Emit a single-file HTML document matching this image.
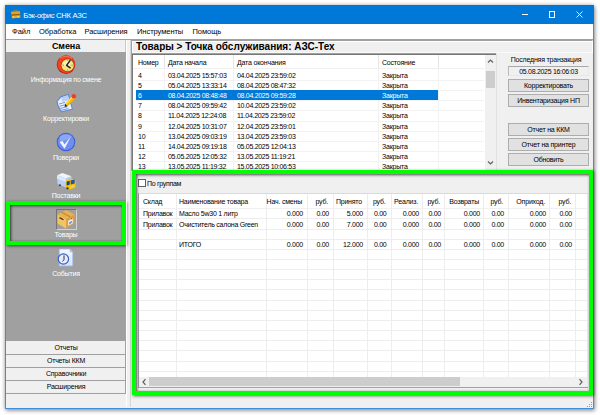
<!DOCTYPE html>
<html><head><meta charset="utf-8">
<style>
*{box-sizing:border-box}
html,body{margin:0;padding:0}
body{width:600px;height:415px;background:#fff;position:relative;overflow:hidden;font-family:"Liberation Sans",sans-serif;font-size:7px;color:#000}
.a{position:absolute}
.t{position:absolute;white-space:pre;line-height:10px;letter-spacing:-0.2px}
.c{text-align:center}
.btn{position:absolute;background:#e1e1e1;border:1px solid #adadad;text-align:center;line-height:11.5px;white-space:pre;letter-spacing:-0.2px}
.lb{position:absolute;left:6px;width:120px;text-align:center;color:#fff;white-space:pre;line-height:10px;letter-spacing:-0.2px}
.g{position:absolute;border:4px solid #00ff00;box-shadow:1px 1px 3px rgba(0,0,0,.6), inset 1px 1px 3px rgba(0,0,0,.7)}
</style></head><body>

<!-- window shadow + frame -->
<div class="a" style="left:5px;top:5px;width:589px;height:404px;background:#f0f0f0;border:1px solid #3b8fdc;box-shadow:0 0 4px rgba(0,0,0,.3),1px 2px 4px rgba(0,0,0,.3)"></div>

<!-- title bar -->
<div class="a" style="left:5px;top:5px;width:589px;height:19px;background:#0078d7"></div>
<svg class="a" style="left:10px;top:9px" width="12" height="11" viewBox="0 0 12 11">
  <path d="M3.8 2.6 L4.2 1.2 L7.2 1.1 L7.6 2.4" fill="none" stroke="#b07818" stroke-width="0.9"/>
  <path d="M1.2 2.8 L10 2.3 L10.3 8.8 L1.9 9.3 Z" fill="#c88418"/>
  <path d="M1.2 2.8 L10 2.3 L10.1 5 L1.4 5.6 Z" fill="#e0a02c"/>
  <path d="M1.4 5.6 L10.1 5 L10.1 5.8 L1.5 6.4 Z" fill="#8c5a0c"/>
  <path d="M2 7 L10.2 6.5 L10.3 8.8 L1.9 9.3 Z" fill="#e8a828"/>
  <ellipse cx="3.5" cy="8" rx="1.2" ry="0.7" fill="#f8d860"/>
  <ellipse cx="8" cy="7.6" rx="1.2" ry="0.7" fill="#f8d860"/>
</svg>
<div class="t" style="left:23.3px;top:10.5px;color:#fff;font-size:7.6px;letter-spacing:-0.28px">Бэк-офис СНК АЗС</div>
<div class="a" style="left:522px;top:14px;width:6px;height:1px;background:#fff"></div>
<div class="a" style="left:549px;top:11px;width:6px;height:7px;border:1px solid #fff"></div>
<svg class="a" style="left:576px;top:11px" width="7" height="7" viewBox="0 0 7 7"><path d="M0.5 0.5L6.5 6.5M6.5 0.5L0.5 6.5" stroke="#fff" stroke-width="0.9"/></svg>

<!-- menu -->
<div class="a" style="left:6px;top:24px;width:587px;height:15px;background:#fff"></div>
<div class="a" style="left:6px;top:39px;width:587px;height:1px;background:#a0a0a0"></div>
<div class="t" style="left:12px;top:26.5px;font-size:7.5px;letter-spacing:-0.05px">Файл</div>
<div class="t" style="left:39px;top:26.5px;font-size:7.5px;letter-spacing:-0.05px">Обработка</div>
<div class="t" style="left:84.5px;top:26.5px;font-size:7.5px;letter-spacing:-0.05px">Расширения</div>
<div class="t" style="left:137px;top:26.5px;font-size:7.5px;letter-spacing:-0.05px">Инструменты</div>
<div class="t" style="left:192.5px;top:26.5px;font-size:7.5px;letter-spacing:-0.05px">Помощь</div>

<!-- left panel -->
<div class="a" style="left:6px;top:40px;width:120px;height:12px;background:#f0f0f0;border-right:1px solid #c8c8c8"></div>
<div class="t c" style="left:6px;top:41px;width:120px;font-weight:bold;font-size:9px;letter-spacing:-0.1px">Смена</div>
<div class="a" style="left:6px;top:52px;width:120px;height:289px;background:#a0a0a0"></div>

<!-- icons -->
<svg class="a" style="left:55px;top:54px" width="22" height="22" viewBox="0 0 22 22">
  <ellipse cx="11" cy="10.6" rx="9.2" ry="9.3" fill="#c01e08"/>
  <ellipse cx="11.2" cy="10.3" rx="8.6" ry="8.6" fill="#ee4422"/>
  <path d="M5 4 Q11 0.5 17 4" fill="none" stroke="#ff8a60" stroke-width="1.2" opacity=".7"/>
  <ellipse cx="12.6" cy="11.2" rx="6.8" ry="6.6" fill="#c02a10"/>
  <ellipse cx="12.6" cy="11.2" rx="6.1" ry="6" fill="#f4e67a"/>
  <ellipse cx="11.8" cy="9.8" rx="3.5" ry="3" fill="#fbf5b8" opacity=".8"/>
  <circle cx="12.6" cy="6.3" r="0.8" fill="#78a8ec"/><circle cx="17" cy="11.2" r="0.8" fill="#78a8ec"/>
  <circle cx="12.6" cy="16" r="0.8" fill="#78a8ec"/><circle cx="8.2" cy="11.2" r="0.8" fill="#78a8ec"/>
  <path d="M15 6.6 L11.6 11.4 L15.2 13.8" fill="none" stroke="#1a2038" stroke-width="1.5" stroke-linecap="round" stroke-linejoin="round"/>
</svg>
<div class="lb" style="top:75px">Информация по смене</div>

<svg class="a" style="left:54px;top:90px" width="24" height="24" viewBox="0 0 24 24">
  <path d="M2.6 11.5 L6.5 6.2 L14.5 3.8 L19 19.5 L7 22.6 L3 14.5 Z" fill="#5f86d8"/>
  <path d="M3.8 11.6 L7 7.4 L13.8 5.2 L17.8 18.8 L7.6 21.3 L4.2 14.4 Z" fill="#e8f0fc"/>
  <path d="M7 7.4 L13.8 5.2 L15.2 10 L8.5 12 Z" fill="#b9cff5"/>
  <path d="M5 14 L11 12.4 M5.6 16.2 L12 14.6 M6.2 18.4 L13 16.8 M7 20.3 L14.5 18.6" stroke="#6d93e0" stroke-width="0.9"/>
  <path d="M11.2 13.8 L18.3 5.8 L21.2 8.4 L13.6 16.4 Z" fill="#f2b414"/>
  <path d="M11.2 13.8 L18.3 5.8 L19.6 7 L12.3 15 Z" fill="#fcd84a"/>
  <circle cx="19.8" cy="6.2" r="2.3" fill="#e84030"/>
  <path d="M11.2 13.8 L13.6 16.4 L10.6 16.8 Z" fill="#222"/>
</svg>
<div class="lb" style="top:114px">Корректировки</div>

<svg class="a" style="left:56px;top:132px" width="20" height="20" viewBox="0 0 20 20">
  <circle cx="10" cy="10" r="9.3" fill="#3a5cd0"/>
  <circle cx="10" cy="10" r="8.3" fill="#6d8ff0"/>
  <path d="M4 4 Q10 1 16 4 Q12 9 4 9Z" fill="#9fb7f7" opacity=".6"/>
  <path d="M3.6 10 L6.6 9 L8.4 12.4 L14.8 4.4 L8.6 16.8 Z" fill="#f4f6ff"/>
</svg>
<div class="lb" style="top:153px">Поверки</div>

<svg class="a" style="left:52px;top:168px" width="28" height="24" viewBox="0 0 28 24">
  <path d="M5 7.2 L10.5 5 L19.5 8.2 L14 10.6 Z" fill="#eef5ff"/>
  <path d="M5 7.2 L14 10.6 L14 19.5 L5.6 16 Z" fill="#b8d0f6"/>
  <path d="M5 7.2 L14 10.6 L14 14 L5.2 10.8 Z" fill="#dce9fd"/>
  <path d="M14 10.6 L19.5 8.2 L19.5 11 L14 13 Z" fill="#b4cdf2"/>
  <circle cx="8" cy="17.3" r="1" fill="#3a4050"/>
  <path d="M13.6 12.5 L19.5 10.4 L23.6 12 L23.4 19.6 L18 21.8 L13.8 19.4 Z" fill="#f2c400"/>
  <path d="M14.6 13.8 L17.6 12.8 L17.8 16.6 L14.8 17.4 Z" fill="#1a3c9c"/>
  <path d="M18.6 12.6 L22.8 11.6 L22.6 15.4 L18.8 16.6 Z" fill="#2450b4"/>
  <path d="M18.5 19.2 L22.6 17.8" stroke="#fff4c0" stroke-width="1" stroke-dasharray="1 0.8"/>
  <circle cx="15.5" cy="20.3" r="1.1" fill="#2a2f40"/>
</svg>
<div class="lb" style="top:191px">Поставки</div>

<div class="a" style="left:56px;top:209px;width:21px;height:21px;border:1px solid;border-color:#747474 #d2d2d2 #d2d2d2 #747474;background:#a0a0a0"></div>
<svg class="a" style="left:57px;top:210px" width="19" height="19" viewBox="0 0 19 19">
  <path d="M0.5 4.4 L9 0 L17.6 4.6 L9 9.2 Z" fill="#e9b24e"/>
  <path d="M4.5 2.3 L13.2 6.9" stroke="#c88a2a" stroke-width="1.2"/>
  <path d="M0.5 4.4 L9 9.2 L9 18.4 L0.6 13.6 Z" fill="#f3c464"/>
  <path d="M9 9.2 L17.6 4.6 L17.5 13.4 L9 18.4 Z" fill="#dea044"/>
  <path d="M2.5 7.6 L6.5 9.8" stroke="#4a3010" stroke-width="1.3"/>
  <path d="M11.2 10.8 L15.8 8.4 L15.7 13.4 L11.2 15.8 Z" fill="#e6eefc"/>
  <path d="M12.2 12.2 L14.8 10.8 L14.8 13 L12.2 14.4 Z" fill="#6c90dc"/>
  <circle cx="14.6" cy="8.6" r="0.6" fill="#e03030"/>
</svg>
<div class="lb" style="top:230px">Товары</div>

<svg class="a" style="left:57px;top:248px" width="18" height="19" viewBox="0 0 18 19">
  <defs><linearGradient id="dg" x1="0" y1="0" x2="0" y2="1"><stop offset="0" stop-color="#f6f9ff"/><stop offset="1" stop-color="#d4e2fa"/></linearGradient></defs>
  <path d="M2.2 1 L12.6 1 L15.8 4.2 L15.8 18 L2.2 18 Z" fill="url(#dg)" stroke="#9db8ea" stroke-width="0.8"/>
  <path d="M12.6 1 L12.6 4.2 L15.8 4.2 Z" fill="#a9c4f0"/>
  <circle cx="6.4" cy="11" r="5.2" fill="#e4ecfc" stroke="#3a5ccc" stroke-width="1.2"/>
  <path d="M7 7.4 L7 11.6 Q6.6 12.8 5.4 13.2" fill="none" stroke="#2a3050" stroke-width="1"/>
</svg>
<div class="lb" style="top:268.5px">События</div>

<!-- left buttons -->
<div class="a" style="left:125px;top:341px;width:1px;height:53px;background:#a0a0a0"></div>
<div class="a" style="left:6px;top:354px;width:120px;height:1px;background:#a0a0a0"></div>
<div class="a" style="left:6px;top:367px;width:120px;height:1px;background:#a0a0a0"></div>
<div class="a" style="left:6px;top:380px;width:120px;height:1px;background:#a0a0a0"></div>
<div class="a" style="left:6px;top:393px;width:120px;height:1px;background:#a0a0a0"></div>
<div class="lb" style="top:343px;color:#000">Отчеты</div>
<div class="lb" style="top:356px;color:#000">Отчеты ККМ</div>
<div class="lb" style="top:369px;color:#000">Справочники</div>
<div class="lb" style="top:382px;color:#000">Расширения</div>

<!-- small green box -->
<div class="g" style="left:6px;top:201px;width:120px;height:44px"></div>

<!-- splitter -->
<div class="a" style="left:126px;top:40px;width:1px;height:367px;background:#fff"></div>
<div class="a" style="left:130px;top:40px;width:1px;height:367px;background:#d6d6d6"></div>
<!-- right header -->
<div class="a" style="left:131px;top:40px;width:462px;height:13px;background:#f0f0f0;border-top:1px solid #a0a0a0;border-left:1px solid #a0a0a0;border-right:1px solid #fff;box-shadow:inset 1px 1px 0 #fff,inset 0 -1px 0 #fafafa"></div>
<div class="t" style="left:136px;top:41px;font-weight:bold;font-size:10px;line-height:12px;letter-spacing:0">Товары &gt; Точка обслуживания: АЗС-Тех</div>

<!-- upper list -->
<div class="a" style="left:131px;top:53px;width:366px;height:118px;background:#fff;border:1px solid #a0a0a0;border-right:none;border-bottom:none;box-shadow:inset 1px 1px 0 #787878"></div>
<div id="ul">
<div class="a" style="left:164px;top:55px;width:1px;height:14px;background:#e5e5e5"></div>
<div class="a" style="left:233px;top:55px;width:1px;height:14px;background:#e5e5e5"></div>
<div class="a" style="left:378px;top:55px;width:1px;height:14px;background:#e5e5e5"></div>
<div class="a" style="left:438px;top:55px;width:1px;height:14px;background:#e5e5e5"></div>
<div class="a" style="left:133px;top:68px;width:351px;height:1px;background:#f0f0f0"></div>
<div class="t" style="left:138px;top:57.5px">Номер</div>
<div class="t" style="left:168px;top:57.5px">Дата начала</div>
<div class="t" style="left:237px;top:57.5px">Дата окончания</div>
<div class="t" style="left:382px;top:57.5px">Состояние</div>
<div class="a" style="left:136px;top:79.70px;width:348px;height:1px;background:#f2f2f2"></div>
<div class="a" style="left:136px;top:89.90px;width:348px;height:1px;background:#f2f2f2"></div>
<div class="a" style="left:136px;top:100.10px;width:348px;height:1px;background:#f2f2f2"></div>
<div class="a" style="left:136px;top:110.30px;width:348px;height:1px;background:#f2f2f2"></div>
<div class="a" style="left:136px;top:120.50px;width:348px;height:1px;background:#f2f2f2"></div>
<div class="a" style="left:136px;top:130.70px;width:348px;height:1px;background:#f2f2f2"></div>
<div class="a" style="left:136px;top:140.90px;width:348px;height:1px;background:#f2f2f2"></div>
<div class="a" style="left:136px;top:151.10px;width:348px;height:1px;background:#f2f2f2"></div>
<div class="a" style="left:136px;top:161.30px;width:348px;height:1px;background:#f2f2f2"></div>
<div class="a" style="left:136px;top:171.50px;width:348px;height:1px;background:#f2f2f2"></div>
<div class="a" style="left:164px;top:69px;width:1px;height:101px;background:#f2f2f2"></div>
<div class="a" style="left:233px;top:69px;width:1px;height:101px;background:#f2f2f2"></div>
<div class="a" style="left:378px;top:69px;width:1px;height:101px;background:#f2f2f2"></div>
<div class="a" style="left:438px;top:69px;width:1px;height:101px;background:#f2f2f2"></div>
<div class="a" style="left:136px;top:90px;width:302px;height:10px;background:#0078d7"></div>
<div class="t" style="left:138px;top:70.60px;">4</div>
<div class="t" style="left:168px;top:70.60px;letter-spacing:-0.3px;">03.04.2025 15:57:03</div>
<div class="t" style="left:237px;top:70.60px;letter-spacing:-0.3px;">04.04.2025 23:59:02</div>
<div class="t" style="left:382px;top:70.60px;">Закрыта</div>
<div class="t" style="left:138px;top:80.80px;">5</div>
<div class="t" style="left:168px;top:80.80px;letter-spacing:-0.3px;">05.04.2025 13:33:14</div>
<div class="t" style="left:237px;top:80.80px;letter-spacing:-0.3px;">08.04.2025 08:47:32</div>
<div class="t" style="left:382px;top:80.80px;">Закрыта</div>
<div class="t" style="left:138px;top:91.00px;color:#fff;">6</div>
<div class="t" style="left:168px;top:91.00px;letter-spacing:-0.3px;color:#fff;">08.04.2025 08:48:48</div>
<div class="t" style="left:237px;top:91.00px;letter-spacing:-0.3px;color:#fff;">08.04.2025 09:59:28</div>
<div class="t" style="left:382px;top:91.00px;color:#fff;">Закрыта</div>
<div class="t" style="left:138px;top:101.20px;">7</div>
<div class="t" style="left:168px;top:101.20px;letter-spacing:-0.3px;">08.04.2025 09:59:42</div>
<div class="t" style="left:237px;top:101.20px;letter-spacing:-0.3px;">10.04.2025 23:59:02</div>
<div class="t" style="left:382px;top:101.20px;">Закрыта</div>
<div class="t" style="left:138px;top:111.40px;">8</div>
<div class="t" style="left:168px;top:111.40px;letter-spacing:-0.3px;">11.04.2025 12:24:08</div>
<div class="t" style="left:237px;top:111.40px;letter-spacing:-0.3px;">11.04.2025 23:59:02</div>
<div class="t" style="left:382px;top:111.40px;">Закрыта</div>
<div class="t" style="left:138px;top:121.60px;">9</div>
<div class="t" style="left:168px;top:121.60px;letter-spacing:-0.3px;">12.04.2025 10:31:07</div>
<div class="t" style="left:237px;top:121.60px;letter-spacing:-0.3px;">12.04.2025 23:59:01</div>
<div class="t" style="left:382px;top:121.60px;">Закрыта</div>
<div class="t" style="left:138px;top:131.80px;">10</div>
<div class="t" style="left:168px;top:131.80px;letter-spacing:-0.3px;">13.04.2025 09:03:19</div>
<div class="t" style="left:237px;top:131.80px;letter-spacing:-0.3px;">13.04.2025 23:59:03</div>
<div class="t" style="left:382px;top:131.80px;">Закрыта</div>
<div class="t" style="left:138px;top:142.00px;">11</div>
<div class="t" style="left:168px;top:142.00px;letter-spacing:-0.3px;">14.04.2025 09:19:18</div>
<div class="t" style="left:237px;top:142.00px;letter-spacing:-0.3px;">05.05.2025 12:04:13</div>
<div class="t" style="left:382px;top:142.00px;">Закрыта</div>
<div class="t" style="left:138px;top:152.20px;">12</div>
<div class="t" style="left:168px;top:152.20px;letter-spacing:-0.3px;">05.05.2025 12:05:32</div>
<div class="t" style="left:237px;top:152.20px;letter-spacing:-0.3px;">13.05.2025 11:19:21</div>
<div class="t" style="left:382px;top:152.20px;">Закрыта</div>
<div class="t" style="left:138px;top:162.40px;">13</div>
<div class="t" style="left:168px;top:162.40px;letter-spacing:-0.3px;">13.05.2025 11:19:32</div>
<div class="t" style="left:237px;top:162.40px;letter-spacing:-0.3px;">15.05.2025 10:06:53</div>
<div class="t" style="left:382px;top:162.40px;">Закрыта</div>
<div class="a" style="left:485px;top:55px;width:11px;height:115px;background:#f0f0f0"></div>
<div class="a" style="left:496px;top:53px;width:1px;height:117px;background:#e0e0e0"></div>
<svg class="a" style="left:487px;top:58px" width="7" height="6" viewBox="0 0 7 6"><path d="M1 4.5 L3.5 2 L6 4.5" fill="none" stroke="#606060" stroke-width="1.2"/></svg>
<div class="a" style="left:486px;top:71px;width:9px;height:17px;background:#cdcdcd"></div>
<svg class="a" style="left:487px;top:160px" width="7" height="6" viewBox="0 0 7 6"><path d="M1 1.5 L3.5 4 L6 1.5" fill="none" stroke="#606060" stroke-width="1.2"/></svg>
</div><!--/ul-->

<!-- right side panel -->
<div class="t c" style="left:500px;top:55px;width:92px">Последняя транзакция</div>
<div class="a" style="left:508px;top:66px;width:81px;height:10px;border:1px solid #c8c8c8;border-color:#a8a8a8 #e8e8e8 #e8e8e8 #b8b8b8;background:#f0f0f0"></div>
<div class="t c" style="left:508px;top:66.8px;width:81px;letter-spacing:-0.3px">05.08.2025 16:06:03</div>
<div class="btn" style="left:508px;top:79px;width:81px;height:13px">Корректировать</div>
<div class="btn" style="left:508px;top:94px;width:81px;height:13px">Инвентаризация НП</div>
<div class="btn" style="left:508px;top:123px;width:81px;height:13px">Отчет на ККМ</div>
<div class="btn" style="left:508px;top:138px;width:81px;height:13px">Отчет на принтер</div>
<div class="btn" style="left:508px;top:153px;width:81px;height:13px">Обновить</div>

<!-- big green box -->
<div class="a" style="left:136px;top:174px;width:453px;height:217px;background:#f0f0f0"></div>
<div class="a" style="left:138px;top:179px;width:8px;height:8px;background:#fff;border:1px solid #606060"></div>
<div class="t" style="left:147px;top:178.5px;letter-spacing:-0.3px">По группам</div>
<div id="grid">
<div class="a" style="left:138px;top:193px;width:450px;height:195px;background:#fff;border:1px solid #a0a0a0;border-top-color:#dadada;border-right:none"></div>
<div class="a" style="left:139px;top:208px;width:449px;height:1px;background:#f0f0f0"></div>
<div class="a" style="left:139px;top:218.36px;width:449px;height:1px;background:#ededed"></div>
<div class="a" style="left:139px;top:228.52px;width:449px;height:1px;background:#ededed"></div>
<div class="a" style="left:139px;top:238.68px;width:449px;height:1px;background:#ededed"></div>
<div class="a" style="left:139px;top:248.84px;width:449px;height:1px;background:#ededed"></div>
<div class="a" style="left:139px;top:259.00px;width:449px;height:1px;background:#ededed"></div>
<div class="a" style="left:139px;top:269.16px;width:449px;height:1px;background:#ededed"></div>
<div class="a" style="left:139px;top:279.32px;width:449px;height:1px;background:#ededed"></div>
<div class="a" style="left:139px;top:289.48px;width:449px;height:1px;background:#ededed"></div>
<div class="a" style="left:139px;top:299.64px;width:449px;height:1px;background:#ededed"></div>
<div class="a" style="left:139px;top:309.80px;width:449px;height:1px;background:#ededed"></div>
<div class="a" style="left:139px;top:319.96px;width:449px;height:1px;background:#ededed"></div>
<div class="a" style="left:139px;top:330.12px;width:449px;height:1px;background:#ededed"></div>
<div class="a" style="left:139px;top:340.28px;width:449px;height:1px;background:#ededed"></div>
<div class="a" style="left:139px;top:350.44px;width:449px;height:1px;background:#ededed"></div>
<div class="a" style="left:139px;top:360.60px;width:449px;height:1px;background:#ededed"></div>
<div class="a" style="left:139px;top:370.76px;width:449px;height:1px;background:#ededed"></div>
<div class="a" style="left:176px;top:194px;width:1px;height:183px;background:#ededed"></div>
<div class="a" style="left:266px;top:194px;width:1px;height:183px;background:#ededed"></div>
<div class="a" style="left:307px;top:194px;width:1px;height:183px;background:#ededed"></div>
<div class="a" style="left:333px;top:194px;width:1px;height:183px;background:#ededed"></div>
<div class="a" style="left:367px;top:194px;width:1px;height:183px;background:#ededed"></div>
<div class="a" style="left:391px;top:194px;width:1px;height:183px;background:#ededed"></div>
<div class="a" style="left:422px;top:194px;width:1px;height:183px;background:#ededed"></div>
<div class="a" style="left:444px;top:194px;width:1px;height:183px;background:#ededed"></div>
<div class="a" style="left:483px;top:194px;width:1px;height:183px;background:#ededed"></div>
<div class="a" style="left:508px;top:194px;width:1px;height:183px;background:#ededed"></div>
<div class="a" style="left:549px;top:194px;width:1px;height:183px;background:#ededed"></div>
<div class="a" style="left:575px;top:194px;width:1px;height:183px;background:#ededed"></div>
<div class="a" style="left:587px;top:194px;width:1px;height:183px;background:#ededed"></div>
<div class="t" style="left:143px;top:196.80px;">Склад</div>
<div class="t" style="left:179px;top:196.80px;">Наименование товара</div>
<div class="t" style="right:298px;top:196.80px;">Нач. смены</div>
<div class="t" style="right:272px;top:196.80px;">руб.</div>
<div class="t" style="right:238px;top:196.80px;">Принято</div>
<div class="t" style="right:214.5px;top:196.80px;">руб.</div>
<div class="t" style="right:182px;top:196.80px;">Реализ.</div>
<div class="t" style="right:160px;top:196.80px;">руб.</div>
<div class="t" style="right:121px;top:196.80px;">Возвраты</div>
<div class="t" style="right:97px;top:196.80px;">руб.</div>
<div class="t" style="right:55px;top:196.80px;">Оприход.</div>
<div class="t" style="right:29px;top:196.80px;">руб.</div>
<div class="t" style="left:143px;top:209.38px;letter-spacing:-0.25px">Прилавок</div>
<div class="t" style="left:179px;top:209.38px;letter-spacing:-0.25px">Масло 5w30 1 литр</div>
<div class="t" style="right:297px;top:209.38px;letter-spacing:-0.25px">0.000</div>
<div class="t" style="right:271px;top:209.38px;letter-spacing:-0.25px">0.00</div>
<div class="t" style="right:237px;top:209.38px;letter-spacing:-0.25px">5.000</div>
<div class="t" style="right:213.5px;top:209.38px;letter-spacing:-0.25px">0.00</div>
<div class="t" style="right:181px;top:209.38px;letter-spacing:-0.25px">0.000</div>
<div class="t" style="right:159px;top:209.38px;letter-spacing:-0.25px">0.00</div>
<div class="t" style="right:120px;top:209.38px;letter-spacing:-0.25px">0.000</div>
<div class="t" style="right:96px;top:209.38px;letter-spacing:-0.25px">0.00</div>
<div class="t" style="right:54px;top:209.38px;letter-spacing:-0.25px">0.000</div>
<div class="t" style="right:28px;top:209.38px;letter-spacing:-0.25px">0.00</div>
<div class="t" style="left:143px;top:219.54px;letter-spacing:-0.25px">Прилавок</div>
<div class="t" style="left:179px;top:219.54px;letter-spacing:-0.25px">Очиститель салона Green</div>
<div class="t" style="right:297px;top:219.54px;letter-spacing:-0.25px">0.000</div>
<div class="t" style="right:271px;top:219.54px;letter-spacing:-0.25px">0.00</div>
<div class="t" style="right:237px;top:219.54px;letter-spacing:-0.25px">7.000</div>
<div class="t" style="right:213.5px;top:219.54px;letter-spacing:-0.25px">0.00</div>
<div class="t" style="right:181px;top:219.54px;letter-spacing:-0.25px">0.000</div>
<div class="t" style="right:159px;top:219.54px;letter-spacing:-0.25px">0.00</div>
<div class="t" style="right:120px;top:219.54px;letter-spacing:-0.25px">0.000</div>
<div class="t" style="right:96px;top:219.54px;letter-spacing:-0.25px">0.00</div>
<div class="t" style="right:54px;top:219.54px;letter-spacing:-0.25px">0.000</div>
<div class="t" style="right:28px;top:219.54px;letter-spacing:-0.25px">0.00</div>
<div class="t" style="left:179px;top:239.86px;letter-spacing:-0.25px">ИТОГО</div>
<div class="t" style="right:297px;top:239.86px;letter-spacing:-0.25px">0.000</div>
<div class="t" style="right:271px;top:239.86px;letter-spacing:-0.25px">0.00</div>
<div class="t" style="right:237px;top:239.86px;letter-spacing:-0.25px">12.000</div>
<div class="t" style="right:213.5px;top:239.86px;letter-spacing:-0.25px">0.00</div>
<div class="t" style="right:181px;top:239.86px;letter-spacing:-0.25px">0.000</div>
<div class="t" style="right:159px;top:239.86px;letter-spacing:-0.25px">0.00</div>
<div class="t" style="right:120px;top:239.86px;letter-spacing:-0.25px">0.000</div>
<div class="t" style="right:96px;top:239.86px;letter-spacing:-0.25px">0.00</div>
<div class="t" style="right:54px;top:239.86px;letter-spacing:-0.25px">0.000</div>
<div class="t" style="right:28px;top:239.86px;letter-spacing:-0.25px">0.00</div>
<div class="a" style="left:139px;top:377px;width:449px;height:10px;background:#f0f0f0"></div>
<svg class="a" style="left:141px;top:378px" width="6" height="8" viewBox="0 0 6 8"><path d="M4.5 1.2 L2 4 L4.5 6.8" fill="none" stroke="#606060" stroke-width="1.2"/></svg>
<div class="a" style="left:149px;top:377px;width:311px;height:9px;background:#cdcdcd"></div>
<svg class="a" style="left:578px;top:378px" width="6" height="8" viewBox="0 0 6 8"><path d="M1.5 1.2 L4 4 L1.5 6.8" fill="none" stroke="#606060" stroke-width="1.2"/></svg>
</div><!--/grid-->
<div class="g" style="left:132px;top:170px;width:461px;height:225px"></div>

<!-- resize grip -->
<svg class="a" style="left:586px;top:401px" width="7" height="7" viewBox="0 0 7 7" fill="#9a9a9a">
<rect x="5" y="1" width="1" height="1"/><rect x="3" y="3" width="1" height="1"/><rect x="5" y="3" width="1" height="1"/><rect x="1" y="5" width="1" height="1"/><rect x="3" y="5" width="1" height="1"/><rect x="5" y="5" width="1" height="1"/>
</svg>

</body></html>
